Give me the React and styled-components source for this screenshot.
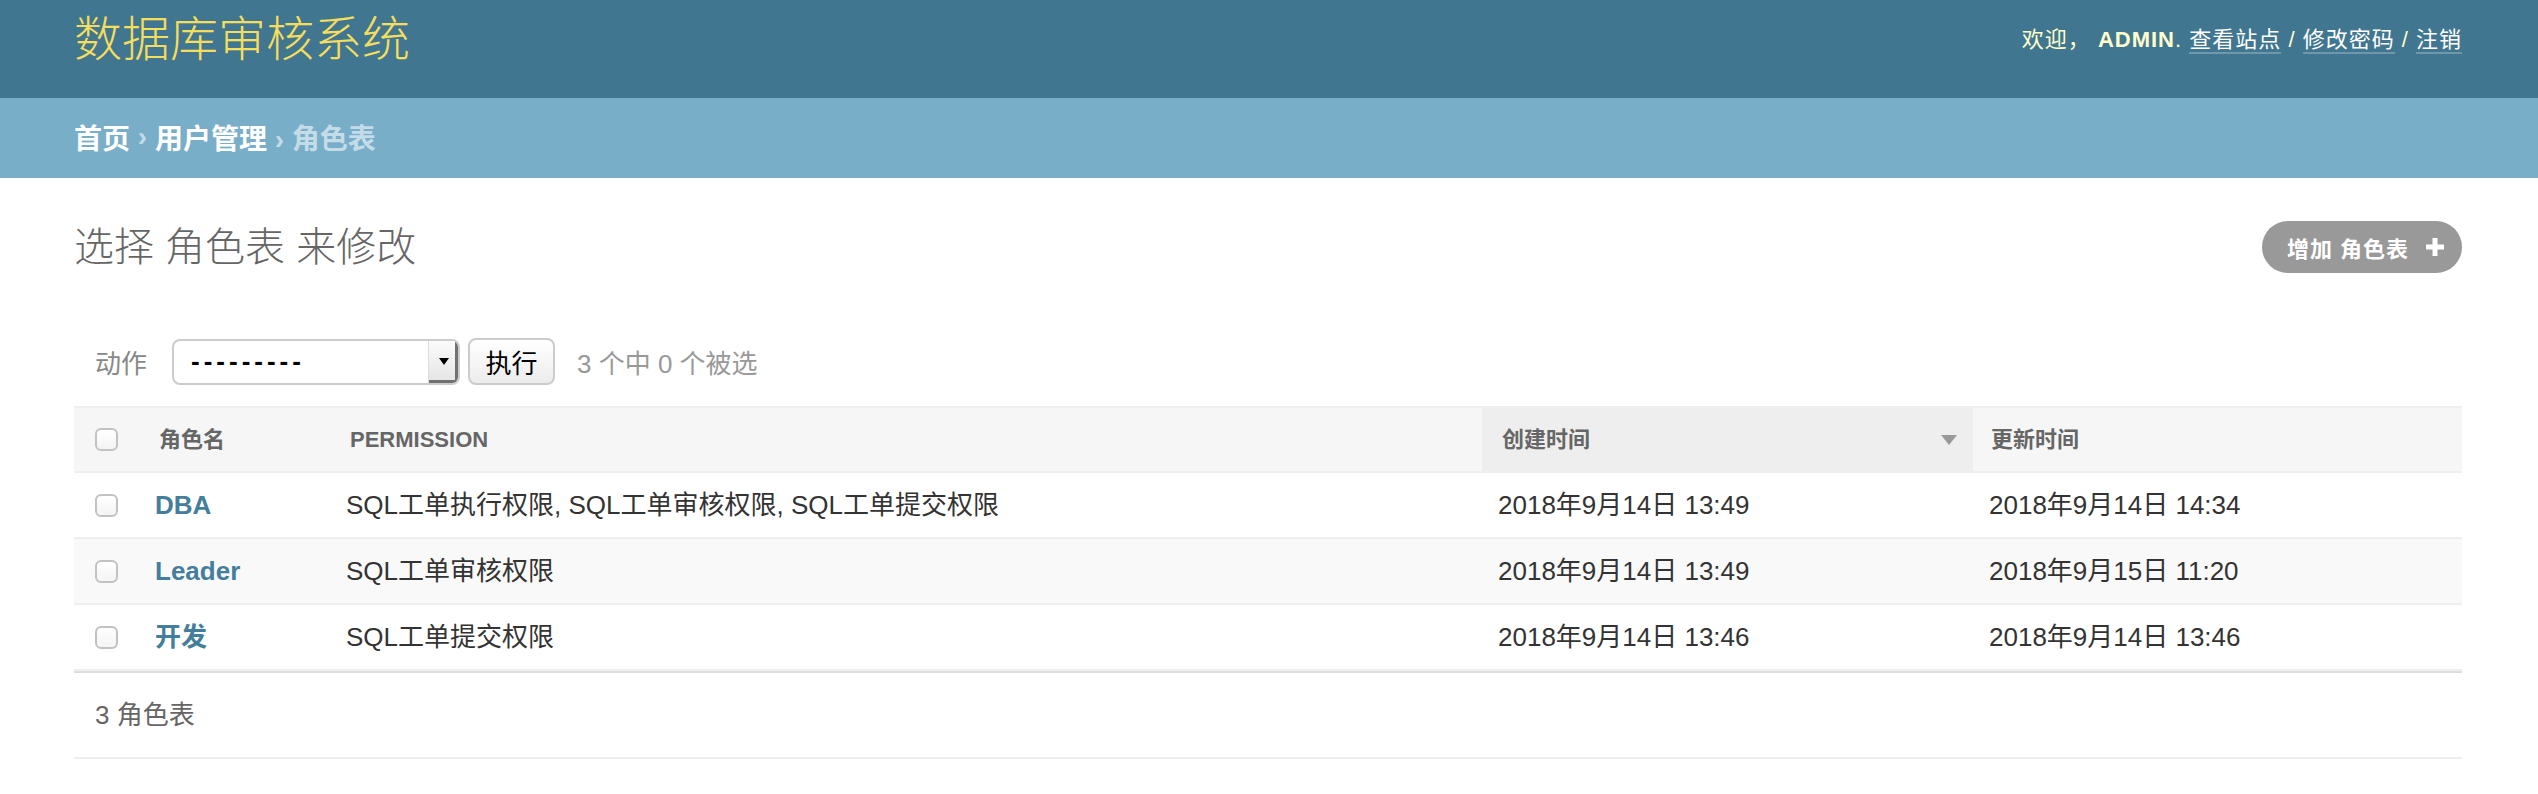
import React from "react";
import styled, { createGlobalStyle } from "styled-components";

const FONT = `"Liberation Sans", "Noto Sans CJK SC", sans-serif`;

const GlobalStyle = createGlobalStyle`
  html, body {
    margin: 0;
    padding: 0;
    background: #fff;
    font-family: ${FONT};
    color: #333;
  }
`;

const Header = styled.header`
  display: flex;
  justify-content: space-between;
  align-items: center;
  padding: 16px 76px 34px 74px;
  background: #417690;
`;

const SiteName = styled.h1`
  margin: 0;
  font-size: 48px;
  line-height: 48px;
  font-weight: 300;
  color: #f5dd5d;
`;

const UserTools = styled.div`
  font-size: 22px;
  line-height: 28px;
  letter-spacing: 1px;
  color: #ffc;
  white-space: pre;
`;

const ToolLink = styled.a`
  color: #fff;
  text-decoration: none;
  border-bottom: 2px solid rgba(255, 255, 255, 0.25);
`;

const Breadcrumbs = styled.nav`
  display: flex;
  align-items: center;
  height: 80px;
  box-sizing: border-box;
  padding: 0 74px 2px;
  background: #79aec8;
  font-size: 28px;
  font-weight: bold;
  color: #c4dce8;
  white-space: pre;
`;

const Crumb = styled.a`
  color: #fff;
  text-decoration: none;
`;

const Content = styled.main`
  padding: 43px 76px 0 74px;
`;

const TitleRow = styled.div`
  display: flex;
  justify-content: space-between;
  align-items: center;
  height: 52px;
`;

const PageTitle = styled.h1`
  margin: 0;
  font-size: 40px;
  line-height: 48px;
  font-weight: 300;
  color: #666;
`;

const AddLink = styled.a`
  display: flex;
  align-items: center;
  height: 52px;
  padding: 0 17px 0 25px;
  border-radius: 26px;
  background: #999;
  color: #fff;
  font-size: 22px;
  font-weight: bold;
  letter-spacing: 1px;
  text-decoration: none;
  svg {
    margin-left: 16px;
  }
`;

const ActionsBar = styled.div`
  display: flex;
  align-items: center;
  height: 47px;
  margin-top: 65px;
  padding-left: 21px;
  font-size: 26px;
`;

const ActionLabel = styled.span`
  color: #888;
  margin-right: 25px;
`;

const SelectBox = styled.div`
  display: flex;
  width: 288px;
  height: 46px;
  box-sizing: border-box;
  border: 2px solid #ccc;
  border-radius: 8px;
  background: #fff;
  overflow: hidden;
`;

const SelectValue = styled.span`
  flex: 1;
  padding-left: 17px;
  line-height: 40px;
  letter-spacing: 4px;
  font-weight: bold;
  color: #000;
`;

const SelectArrow = styled.span`
  display: flex;
  align-items: center;
  justify-content: center;
  width: 30px;
  box-sizing: border-box;
  background: linear-gradient(to bottom, #fbfbfb, #e4e4e4);
  border-left: 1px solid #ddd;
  box-shadow: inset -3px -3px 0 #707070;
`;

const RunButton = styled.button`
  width: 87px;
  height: 47px;
  margin-left: 8px;
  border: 2px solid #ccc;
  border-radius: 8px;
  background: linear-gradient(to bottom, #fff, #ececec);
  font-family: ${FONT};
  font-size: 26px;
  color: #000;
  padding: 0;
`;

const Counter = styled.span`
  margin-left: 22px;
  color: #999;
`;

const Table = styled.table`
  width: 100%;
  margin-top: 21px;
  border-collapse: collapse;
  table-layout: fixed;
`;

const HeadCell = styled.th`
  padding: 16px 20px;
  line-height: 31px;
  font-size: 22px;
  font-weight: bold;
  color: #666;
  text-align: left;
  text-transform: uppercase;
  vertical-align: middle;
  background: ${(p) => (p.sorted ? "#eee" : "#f6f6f6")};
  border-top: 2px solid #eee;
  border-bottom: 2px solid #eee;
  padding-left: ${(p) => (p.check ? "21px" : p.tight ? "18px" : "20px")};
`;

const SortHead = styled.div`
  display: flex;
  justify-content: space-between;
  align-items: center;
  margin-right: -4px;
`;

const Row = styled.tr`
  background: ${(p) => (p.alt ? "#f9f9f9" : "#fff")};
`;

const Cell = styled.td`
  padding: 16px;
  padding-left: ${(p) => (p.check ? "21px" : "16px")};
  line-height: 32px;
  font-size: 26px;
  color: #333;
  vertical-align: middle;
  border-bottom: 2px solid #eee;
`;

const NameLink = styled.a`
  color: #447e9b;
  font-weight: bold;
  text-decoration: none;
`;

const Check = styled.span`
  display: block;
  width: 23px;
  height: 23px;
  box-sizing: border-box;
  border: 2px solid #c2c2c2;
  border-radius: 6px;
  background: linear-gradient(to bottom, #fff, #f4f4f4);
`;

const Paginator = styled.div`
  padding: 0 21px;
  line-height: 84px;
  font-size: 26px;
  color: #666;
  border-top: 2px solid #ddd;
  border-bottom: 2px solid #eee;
`;

const PlusIcon = () => (
  <svg width="20" height="20" viewBox="0 0 20 20">
    <path d="M10 1v18M1 10h18" stroke="#fff" strokeWidth="5" />
  </svg>
);

const SortArrow = () => (
  <svg width="16" height="10" viewBox="0 0 16 10">
    <path d="M0 0h16L8 10z" fill="#999" />
  </svg>
);

const DropArrow = () => (
  <svg width="10" height="7" viewBox="0 0 10 7">
    <path d="M0 0h10L5 7z" fill="#000" />
  </svg>
);

const roles = [
  {
    name: "DBA",
    perms: "SQL工单执行权限, SQL工单审核权限, SQL工单提交权限",
    created: "2018年9月14日 13:49",
    updated: "2018年9月14日 14:34",
  },
  {
    name: "Leader",
    perms: "SQL工单审核权限",
    created: "2018年9月14日 13:49",
    updated: "2018年9月15日 11:20",
  },
  {
    name: "开发",
    perms: "SQL工单提交权限",
    created: "2018年9月14日 13:46",
    updated: "2018年9月14日 13:46",
  },
];

export default function App() {
  return (
    <>
      <GlobalStyle />
      <Header>
        <SiteName>数据库审核系统</SiteName>
        <UserTools>
          欢迎， <strong>ADMIN</strong>. <ToolLink href="#">查看站点</ToolLink> /{" "}
          <ToolLink href="#">修改密码</ToolLink> / <ToolLink href="#">注销</ToolLink>
        </UserTools>
      </Header>
      <Breadcrumbs>
        <Crumb href="#">首页</Crumb> › <Crumb href="#">用户管理</Crumb> › 角色表
      </Breadcrumbs>
      <Content>
        <TitleRow>
          <PageTitle>选择 角色表 来修改</PageTitle>
          <AddLink href="#">
            增加 角色表
            <PlusIcon />
          </AddLink>
        </TitleRow>

        <ActionsBar>
          <ActionLabel>动作</ActionLabel>
          <SelectBox>
            <SelectValue>---------</SelectValue>
            <SelectArrow>
              <DropArrow />
            </SelectArrow>
          </SelectBox>
          <RunButton>执行</RunButton>
          <Counter>3 个中 0 个被选</Counter>
        </ActionsBar>

        <Table>
          <colgroup>
            <col style={{ width: 65 }} />
            <col style={{ width: 191 }} />
            <col style={{ width: 1152 }} />
            <col style={{ width: 491 }} />
            <col />
          </colgroup>
          <thead>
            <tr>
              <HeadCell check>
                <Check />
              </HeadCell>
              <HeadCell>角色名</HeadCell>
              <HeadCell>Permission</HeadCell>
              <HeadCell sorted>
                <SortHead>
                  创建时间
                  <SortArrow />
                </SortHead>
              </HeadCell>
              <HeadCell tight>更新时间</HeadCell>
            </tr>
          </thead>
          <tbody>
            {roles.map((r, i) => (
              <Row key={r.name} alt={i % 2 === 1}>
                <Cell check>
                  <Check />
                </Cell>
                <Cell>
                  <NameLink href="#">{r.name}</NameLink>
                </Cell>
                <Cell>{r.perms}</Cell>
                <Cell>{r.created}</Cell>
                <Cell>{r.updated}</Cell>
              </Row>
            ))}
          </tbody>
        </Table>
        <Paginator>3 角色表</Paginator>
      </Content>
    </>
  );
}
